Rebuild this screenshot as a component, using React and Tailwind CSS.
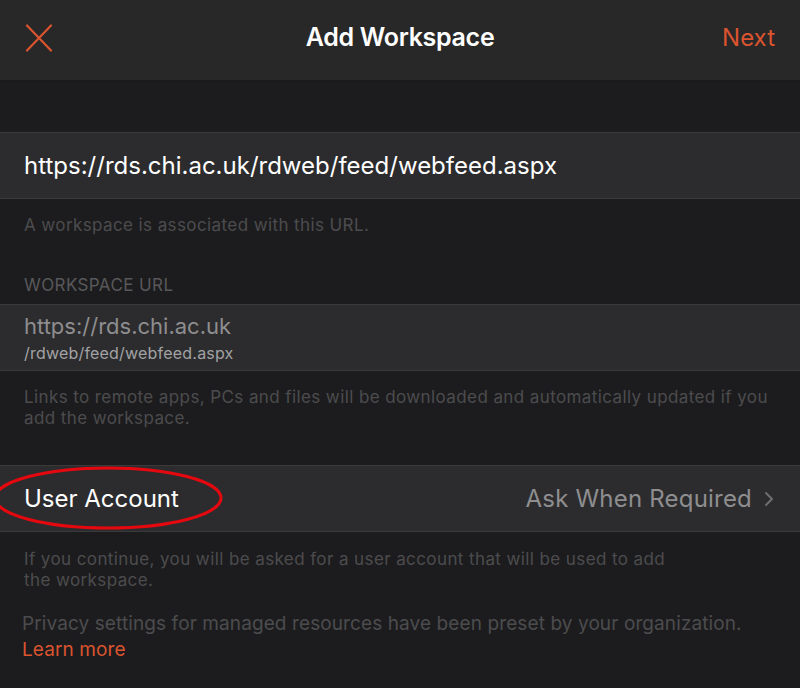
import React from 'react';

const orange = 'text-[#d9542f]';

export default function App() {
  return (
    <div className="w-[800px] h-[688px] overflow-hidden bg-[#1c1c1e] font-['Inter',sans-serif]">
      <div className="h-[81px] bg-[#282828] border-b border-[#1a1a1a] flex items-center pl-[25px] pr-[25px] pb-[4px]">
        <div className="flex-1 flex">
          <svg width="28" height="28" viewBox="0 0 28 28" className="text-[#d9542f]">
            <path d="M2 1.5 L26 26.5 M26 1.5 L2 26.5" stroke="currentColor" strokeWidth="2.2" strokeLinecap="round" />
          </svg>
        </div>
        <div className="text-white text-[25px] font-semibold tracking-[-0.3px]">Add Workspace</div>
        <div className="flex-1 flex justify-end">
          <span className={`${orange} text-[24px]`}>Next</span>
        </div>
      </div>

      <div className="h-[51px]" />

      <div className="h-[67px] bg-[#2c2c2e] border-y border-[#3a3a3c] flex items-center px-[24px]">
        <span className="text-white text-[24px]">https://rds.chi.ac.uk/rdweb/feed/webfeed.aspx</span>
      </div>
      <div className="px-[24px] pt-[15px] text-[17px] leading-[22px] text-[#4c4c4e] tracking-[0.4px]">A workspace is associated with this URL.</div>

      <div className="px-[24px] pt-[38px] pb-[8px] text-[17px] leading-[22px] text-[#58585a] tracking-[0.4px]">WORKSPACE URL</div>
      <div className="h-[67px] bg-[#2c2c2e] border-y border-[#3a3a3c] flex flex-col px-[24px] pt-[8px]">
        <span className="text-[#8e8e90] text-[22px] leading-[26px]">https://rds.chi.ac.uk</span>
        <span className="mt-[3px] text-[#a2a2a4] text-[16px] leading-[22px] tracking-[0.2px]">/rdweb/feed/webfeed.aspx</span>
      </div>
      <div className="pl-[24px] pr-[14px] pt-[16px] text-[17px] leading-[21px] text-[#4c4c4e] tracking-[0.4px]">
        Links to remote apps, PCs and files will be downloaded and automatically updated if you add the workspace.
      </div>

      <div className="h-[36px]" />
      <div className="relative h-[67px] bg-[#2c2c2e] border-y border-[#3a3a3c] flex items-center justify-between pl-[24px] pr-[26px]">
        <span className="text-white text-[24px]">User Account</span>
        <div className="flex items-center gap-[12px]">
          <span className="text-[#8e8e90] text-[24px] tracking-[0.2px]">Ask When Required</span>
          <svg width="10" height="16" viewBox="0 0 10 16">
            <path d="M2 2 L8 8 L2 14" fill="none" stroke="#6e6e70" strokeWidth="2" strokeLinecap="round" strokeLinejoin="round" />
          </svg>
        </div>
        <svg className="absolute left-0 top-0" width="240" height="67" viewBox="0 0 240 67">
          <ellipse cx="108" cy="32" rx="113" ry="30" fill="none" stroke="#e5080f" strokeWidth="3" />
        </svg>
      </div>
      <div className="pl-[24px] pt-[17px] text-[17px] leading-[21px] text-[#4c4c4e] tracking-[0.4px] w-[694px]">
        If you continue, you will be asked for a user account that will be used to add the workspace.
      </div>
      <div className="px-[22px] pt-[20px] text-[19px] leading-[26px] text-[#4c4c4e] tracking-[0.1px]">
        Privacy settings for managed resources have been preset by your organization.
        <div className={orange}>Learn more</div>
      </div>
    </div>
  );
}
